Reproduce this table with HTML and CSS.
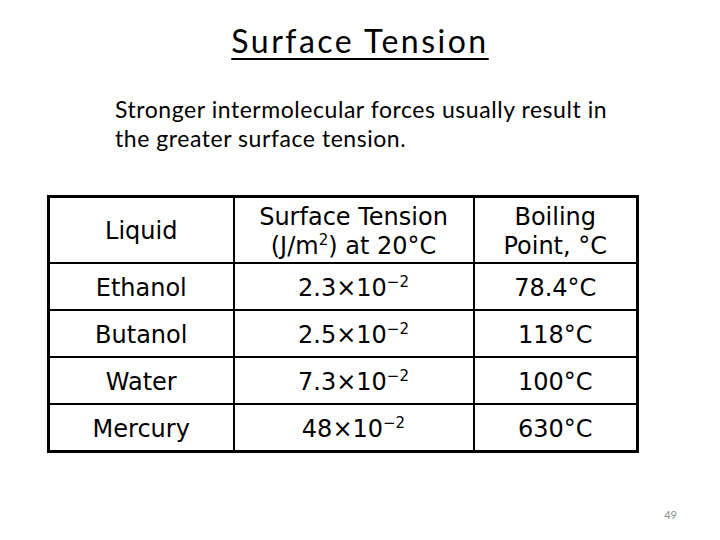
FILE: index.html
```html
<!DOCTYPE html>
<html lang="en">
<head>
    <meta charset="UTF-8">
    <meta name="viewport" content="width=device-width, initial-scale=1.0">
    <title>Surface Tension</title>
    <link rel="stylesheet" href="styles.css">
</head>
<body>

    <div class="slide">
        <h1 class="title">Surface Tension</h1>

        <p class="lead">Stronger intermolecular forces usually result in<br>the greater surface tension.</p>

        <table class="data">
            <colgroup>
                <col class="c1">
                <col class="c2">
                <col class="c3">
            </colgroup>
            <tr class="head">
                <td>Liquid</td>
                <td>Surface Tension<br>(J/m<sup>2</sup>) at 20°C</td>
                <td>Boiling<br>Point, °C</td>
            </tr>
            <tr>
                <td>Ethanol</td>
                <td>2.3×10<sup>−2</sup></td>
                <td>78.4°C</td>
            </tr>
            <tr>
                <td>Butanol</td>
                <td>2.5×10<sup>−2</sup></td>
                <td>118°C</td>
            </tr>
            <tr>
                <td>Water</td>
                <td>7.3×10<sup>−2</sup></td>
                <td>100°C</td>
            </tr>
            <tr>
                <td>Mercury</td>
                <td>48×10<sup>−2</sup></td>
                <td>630°C</td>
            </tr>
        </table>

        <div class="page-num">49</div>
    </div>

</body>
</html>
```

FILE: styles.css
```css
body {
    margin: 0;
    background-color: #ffffff;
}
.slide {
    width: 720px;
    height: 540px;
    display: flex;
    flex-direction: column;
    font-family: Lato, "Liberation Sans", sans-serif;
    color: #000;
    overflow: hidden;
}
.title {
    margin: 0;
    padding-top: 22px;
    font-size: 32px;
    line-height: 38px;
    font-weight: normal;
    letter-spacing: 2.5px;
    text-align: center;
    text-decoration: underline;
    text-decoration-thickness: 2px;
    text-underline-offset: 5px;
}
.lead {
    margin: 35px 0 0 0;
    padding-left: 115px;
    font-size: 23px;
    line-height: 29px;
    letter-spacing: 0.55px;
}
.data {
    width: 589px;
    margin: 42px 0 0 47px;
    border-collapse: collapse;
    border: 3px solid #000;
    font-family: "DejaVu Sans", Verdana, sans-serif;
    font-size: 24px;
    table-layout: fixed;
}
.c1 { width: 185px; }
.c2 { width: 240px; }
.c3 { width: 164px; }
.data td {
    border: 2px solid #000;
    text-align: center;
    vertical-align: middle;
    height: 42px;
    padding: 3px 0 0 0;
    line-height: 29px;
}
.data .head td {
    height: 61px;
}
.data sup {
    font-size: 15px;
    line-height: 0;
    vertical-align: 9px;
}
.page-num {
    margin-top: auto;
    align-self: flex-end;
    padding: 0 43px 19px 0;
    font-size: 11px;
    color: #8c8c8c;
}
```
